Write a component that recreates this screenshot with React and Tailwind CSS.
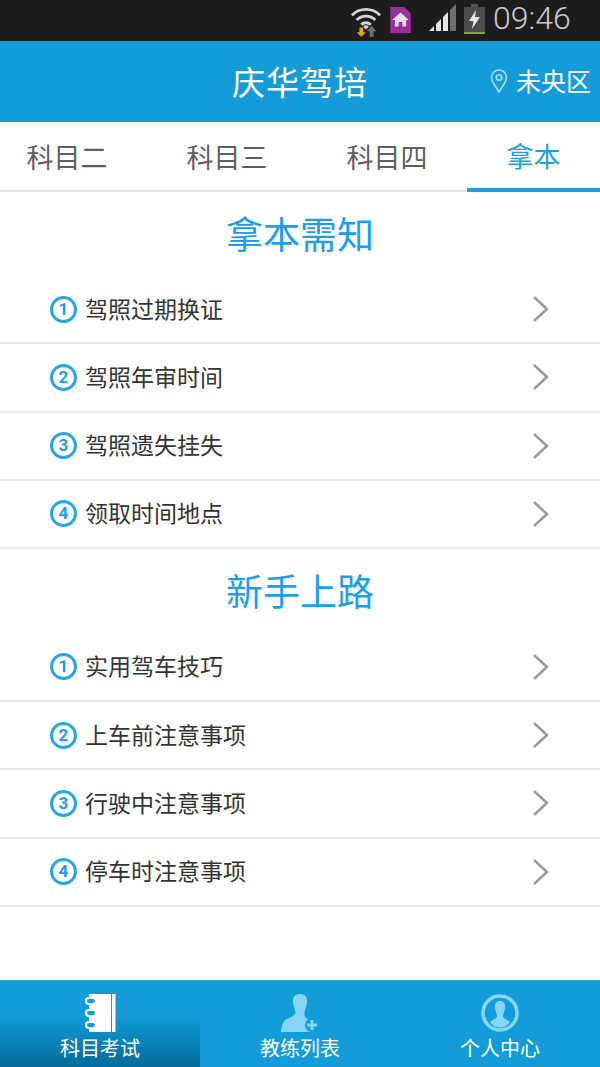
const FONT = "font-['Noto_Sans_CJK_SC','Noto_Sans',sans-serif]";

const tabs = ["科目二", "科目三", "科目四"];

const sections = [
  { title: "拿本需知", items: ["驾照过期换证", "驾照年审时间", "驾照遗失挂失", "领取时间地点"] },
  { title: "新手上路", items: ["实用驾车技巧", "上车前注意事项", "行驶中注意事项", "停车时注意事项"] },
];

const StatusIcons = () => (
  <div className="flex items-center h-full">
    {/* wifi */}
    <svg width="30" height="38" viewBox="0 0 32 38" className="mt-[1px]">
      <path d="M1 13 A21 21 0 0 1 31 13" fill="none" stroke="#d4d4d4" strokeWidth="3" />
      <path d="M6 18 A14 14 0 0 1 26 18" fill="none" stroke="#d4d4d4" strokeWidth="3" />
      <path d="M11 23 A7 7 0 0 1 21 23" fill="none" stroke="#d4d4d4" strokeWidth="3" />
      <path d="M16 28 L13 25 A4 4 0 0 1 19 25 Z" fill="#d4d4d4" />
      <path d="M9 26 h4 v5 h3 l-5 5 l-5 -5 h3 z" fill="#d9a90f" />
      <path d="M20 36 h4 v-6 h3 l-5 -6 l-5 6 h3 z" fill="#6e6e6e" />
    </svg>
    {/* sms/home */}
    <svg width="23" height="27" viewBox="0 0 24 29" className="ml-[8px] mb-[1px]">
      <path d="M1 0 H16 L23 7 V28 H1 Z" fill="#9b2f9c" />
      <path d="M12 6 L21 14 H18 V21 H14 V16 H10 V21 H6 V14 H3 Z" fill="#e6dfe6" />
    </svg>
    {/* signal */}
    <svg width="28" height="28" viewBox="0 0 28 28" className="ml-[17px] mb-[6px]">
      <path d="M0 27 L5 22 V27 Z" fill="#e5e5e5" />
      <path d="M7 20 L12 15 V27 H7 Z" fill="#e5e5e5" />
      <path d="M14 13 L19 8 V27 H14 Z" fill="#e5e5e5" />
      <path d="M21 6 L27 0 V27 H21 Z" fill="#6f6f6f" />
    </svg>
    {/* battery */}
    <svg width="21" height="30" viewBox="0 0 21 30" className="ml-[7px] mb-[4px]">
      <rect x="7" y="0" width="7" height="3" fill="#555" />
      <rect x="0" y="3" width="21" height="27" fill="#4b4b4b" />
      <rect x="0" y="28" width="21" height="2" fill="#7fae22" />
      <path d="M12 6 L5 17 H9.5 L8 25 L16 13 H11 Z" fill="#e8e8e8" />
    </svg>
    <span className="ml-[8px] w-[79px] text-[32px] leading-none text-[#c9c9c9] font-['Roboto',sans-serif] font-light mb-[6px]">09:46</span>
  </div>
);

const NumberBadge = ({ n }) => (
  <span className="w-[27px] h-[27px] rounded-full border-[3px] border-[#2ba5e6] flex items-center justify-center text-[17px] font-bold leading-none text-[#1c9df0] font-['Roboto',sans-serif]">
    {n}
  </span>
);

const Chevron = () => (
  <svg width="17" height="26" viewBox="0 0 17 26" fill="none" stroke="#9a9a9a" strokeWidth="2.500" className="ml-auto">
    <path d="M2 1 L15 13 L2 25" />
  </svg>
);

const Row = ({ n, label }) => (
  <div className="h-[68.25px] pl-[50px] pr-[51px] flex items-center border-b-2 border-[#e9e9e9]">
    <NumberBadge n={n} />
    <span className="ml-[8px] mb-[2px] text-[23px] leading-none text-[#333333]">{label}</span>
    <Chevron />
  </div>
);

const NotebookIcon = () => (
  <svg width="32" height="38" viewBox="0 0 32 38">
    <rect x="5" y="0" width="22" height="38" fill="#fff" />
    <rect x="2" y="4" width="10" height="6" rx="3" fill="#149cd8" stroke="#fff" strokeWidth="2.200" />
    <rect x="2" y="16" width="10" height="6" rx="3" fill="#149cd8" stroke="#fff" strokeWidth="2.200" />
    <rect x="2" y="28" width="10" height="6" rx="3" fill="#149cd8" stroke="#fff" strokeWidth="2.200" />
    <rect x="28" y="0" width="3.500" height="38" fill="#fff" />
  </svg>
);

const CoachIcon = () => (
  <svg width="38" height="38" viewBox="0 0 38 38">
    <path d="M19 0 C14 0 11.500 3 12 8 C12.500 13 14 15 14.500 18 C14.500 21 12 22.500 7 24.500 C2 26.500 0.500 31 0 38 H33 C33 31 31 27 25.500 24.500 C23 22.500 23.500 20 23.500 18 C24 15 25.500 13 26 8 C26.500 3 24 0 19 0 Z" fill="#86d6fb" />
    <circle cx="31" cy="31" r="7" fill="#149cd8" />
    <path d="M29.500 26 h3 v3.500 h3.500 v3 h-3.500 v3.500 h-3 v-3.500 h-3.500 v-3 h3.500 z" fill="#86d6fb" />
  </svg>
);

const ProfileIcon = () => (
  <svg width="38" height="38" viewBox="0 0 38 38">
    <circle cx="19" cy="19" r="17" fill="none" stroke="#86d6fb" strokeWidth="3.500" />
    <path d="M19 7 C15 7 13.500 10 14 14 C14.500 18 16 20 16 22 C16 24 13 25 9 28 C12 32 15 33.500 19 33.500 C23 33.500 26 32 29 28 C25 25 22 24 22 22 C22 20 23.500 18 24 14 C24.500 10 23 7 19 7 Z" fill="#86d6fb" />
  </svg>
);

const NavItem = ({ icon, label, active }) => (
  <div className={`flex-1 flex flex-col items-center pt-[13px] ${active ? "bg-gradient-to-b from-[#149cd8] from-40% to-[#016a9b]" : ""}`}>
    <div className="h-[38px] flex items-center justify-center">{icon}</div>
    <span className="mt-[6px] text-[20px] leading-none text-white">{label}</span>
  </div>
);

export default function App() {
  return (
    <div className={`w-[600px] h-[1067px] bg-white flex flex-col overflow-hidden ${FONT}`}>
      {/* status bar */}
      <div className="h-[41px] shrink-0 bg-[#1c1c1c] flex justify-end pr-[28px]">
        <StatusIcons />
      </div>

      {/* header */}
      <div className="h-[81px] shrink-0 bg-[#149cd8] relative flex items-center justify-center">
        <h1 className="text-[33px] leading-none text-white tracking-[1px]">庆华驾培</h1>
        <div className="absolute right-[9px] top-[27px] flex items-center text-white">
          <svg width="18" height="24" viewBox="0 0 18 24" fill="none" stroke="#a9e0f7" strokeWidth="1.600">
            <path d="M9 23 C5 16 1.500 13 1.500 8.500 A7.500 7.500 0 0 1 16.500 8.500 C16.500 13 13 16 9 23 Z" />
            <circle cx="9" cy="8.500" r="2.800" />
          </svg>
          <span className="ml-[8px] text-[25px] leading-none">未央区</span>
        </div>
      </div>

      {/* tabs */}
      <div className="h-[70px] shrink-0 flex gap-[26px] border-b-2 border-[#e2e2e2]">
        {tabs.map((tab) => (
          <div key={tab} className="w-[134px] shrink-0 flex items-center justify-center text-[27px] leading-none text-[#5f5f5f]">
            {tab}
          </div>
        ))}
        <div className="-ml-[13px] w-[133px] shrink-0 -mb-[2px] flex items-center justify-center text-[27px] leading-none text-[#1f9fdc] border-b-[4px] border-[#1f9fdc]">
          拿本
        </div>
      </div>

      {/* lists */}
      <div className="flex-1">
        {sections.map((section) => (
          <section key={section.title} className="last:pt-[0.75px]">
            <h2 className="h-[84px] pb-[2px] flex items-center justify-center text-[37px] leading-none text-[#1c9df0]">
              {section.title}
            </h2>
            {section.items.map((item, i) => (
              <Row key={item} n={i + 1} label={item} />
            ))}
          </section>
        ))}
      </div>

      {/* bottom nav */}
      <div className="h-[87px] shrink-0 bg-[#149cd8] border-t-[1px] border-[#36aee2] flex">
        <NavItem icon={<NotebookIcon />} label="科目考试" active />
        <NavItem icon={<CoachIcon />} label="教练列表" />
        <NavItem icon={<ProfileIcon />} label="个人中心" />
      </div>
    </div>
  );
}
